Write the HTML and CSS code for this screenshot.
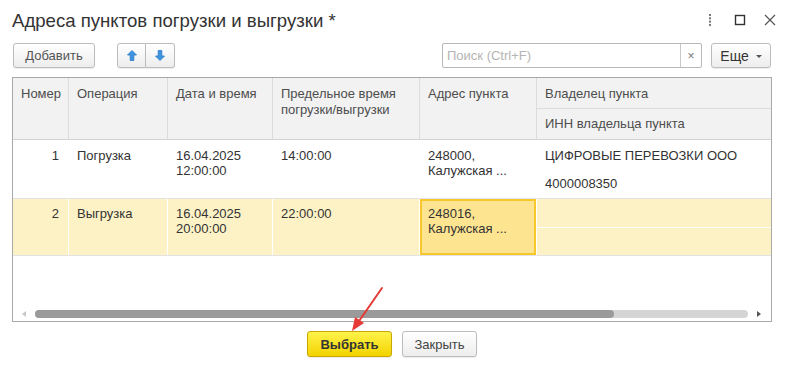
FILE: index.html
```html
<!DOCTYPE html>
<html lang="ru">
<head>
    <meta charset="UTF-8" />
    <title>Адреса пунктов погрузки и выгрузки</title>
    <link rel="stylesheet" href="styles.css">
</head>
<body>
    <div class="window">
        <header class="titlebar">
            <h1 class="title">Адреса пунктов погрузки и выгрузки *</h1>
            <div class="win-controls">
                <span class="win-btn">
                    <svg width="4" height="12" viewBox="0 0 4 12"><rect x="1" y="0" width="2" height="2" fill="#777"/><rect x="1" y="3.3" width="2" height="2" fill="#777"/><rect x="1" y="6.6" width="2" height="2" fill="#777"/><rect x="1" y="9.9" width="2" height="2" fill="#777"/></svg>
                </span>
                <span class="win-btn">
                    <svg width="12" height="12" viewBox="0 0 12 12"><rect x="1.5" y="1.5" width="9" height="9" fill="none" stroke="#333" stroke-width="1.4"/></svg>
                </span>
                <span class="win-btn">
                    <svg width="12" height="12" viewBox="0 0 12 12"><path d="M1 1 L11 11 M11 1 L1 11" stroke="#555" stroke-width="1.2"/></svg>
                </span>
            </div>
        </header>

        <div class="toolbar">
            <button class="btn btn-add">Добавить</button>
            <div class="btn-group">
                <button class="btn btn-icon">
                    <svg width="10" height="11" viewBox="0 0 10 11"><path d="M5 0.5 L9.5 5 L6.8 5 L6.8 10.5 L3.2 10.5 L3.2 5 L0.5 5 Z" fill="#3d94e0" stroke="#2a78c6" stroke-width="0.8"/></svg>
                </button>
                <button class="btn btn-icon">
                    <svg width="10" height="11" viewBox="0 0 10 11"><path d="M5 10.5 L9.5 6 L6.8 6 L6.8 0.5 L3.2 0.5 L3.2 6 L0.5 6 Z" fill="#3d94e0" stroke="#2a78c6" stroke-width="0.8"/></svg>
                </button>
            </div>
            <div class="search">
                <input type="text" class="search-input" placeholder="Поиск (Ctrl+F)" />
                <span class="search-clear">×</span>
            </div>
            <button class="btn btn-more">Еще <span class="caret"></span></button>
        </div>

        <div class="grid-box">
            <div class="grid-head">
                <div class="hc span2">Номер</div>
                <div class="hc span2">Операция</div>
                <div class="hc span2">Дата и время</div>
                <div class="hc span2">Предельное время погрузки/выгрузки</div>
                <div class="hc span2">Адрес пункта</div>
                <div class="hc">Владелец пункта</div>
                <div class="hc hc-sub">ИНН владельца пункта</div>
            </div>

            <div class="grid-row row-first">
                <div class="c span2 num">1</div>
                <div class="c span2">Погрузка</div>
                <div class="c span2">16.04.2025<br>12:00:00</div>
                <div class="c span2">14:00:00</div>
                <div class="c span2">248000,<br>Калужская ...</div>
                <div class="c">ЦИФРОВЫЕ ПЕРЕВОЗКИ ООО</div>
                <div class="c c-sub">4000008350</div>
            </div>

            <div class="grid-row row-selected">
                <div class="c span2 num">2</div>
                <div class="c span2">Выгрузка</div>
                <div class="c span2">16.04.2025<br>20:00:00</div>
                <div class="c span2">22:00:00</div>
                <div class="c span2 current">248016,<br>Калужская ...</div>
                <div class="c"></div>
                <div class="c c-sub"></div>
            </div>

            <div class="grid-fill"></div>

            <div class="hscroll">
                <span class="arrow-left"></span>
                <div class="track"><div class="thumb"></div></div>
                <span class="arrow-right"></span>
            </div>
        </div>

        <div class="footer">
            <button class="btn btn-primary">Выбрать</button>
            <button class="btn btn-close">Закрыть</button>
        </div>

        <svg class="pointer" width="790" height="370" viewBox="0 0 790 370">
            <line x1="382" y1="288" x2="357" y2="324" stroke="#e53a35" stroke-width="2" stroke-linecap="round"/>
            <polygon points="352,331 355,317 364,323" fill="#e53a35"/>
        </svg>
    </div>
</body>
</html>
```

FILE: styles.css
```css
body {
    margin: 0;
    background-color: #ffffff;
    font-family: "Liberation Sans", Arial, sans-serif;
    font-size: 13px;
    color: #333333;
}
.window {
    position: relative;
    width: 790px;
    height: 370px;
}
.titlebar {
    display: flex;
    align-items: flex-start;
    height: 43px;
    padding: 0 5px 0 12px;
    box-sizing: border-box;
}
.title {
    flex: 1;
    margin: 10px 0 0;
    font-size: 18.6px;
    font-weight: normal;
    line-height: 22px;
    color: #333333;
}
.win-controls {
    display: flex;
    margin-top: 14px;
}
.win-btn {
    display: flex;
    justify-content: center;
    width: 30px;
    height: 12px;
}

/* toolbar */
.toolbar {
    display: flex;
    height: 25px;
    padding: 0 19px 0 13px;
}
.btn {
    height: 25px;
    box-sizing: border-box;
    border: 1px solid #bdbdbd;
    border-radius: 3px;
    background: linear-gradient(#ffffff, #ededed);
    box-shadow: 0 1px 1px rgba(0, 0, 0, 0.08);
    font-family: "Liberation Sans", Arial, sans-serif;
    font-size: 13px;
    color: #555555;
    padding: 0;
    cursor: pointer;
}
.btn-add {
    width: 82px;
}
.btn-group {
    display: flex;
    margin-left: 22px;
}
.btn-icon {
    width: 29px;
    display: flex;
    align-items: center;
    justify-content: center;
}
.btn-group .btn-icon:first-child {
    border-radius: 3px 0 0 3px;
}
.btn-group .btn-icon:last-child {
    border-radius: 0 3px 3px 0;
    border-left: none;
}
.search {
    display: flex;
    margin-left: auto;
    width: 260px;
    height: 25px;
    box-sizing: border-box;
    border: 1px solid #b8b8b8;
    border-radius: 2px;
}
.search-input {
    flex: 1;
    min-width: 0;
    border: none;
    outline: none;
    padding: 0 4px;
    font-family: "Liberation Sans", Arial, sans-serif;
    font-size: 13px;
    color: #333333;
    background: transparent;
}
.search-input::placeholder {
    color: #b4b4b4;
}
.search-clear {
    width: 20px;
    border-left: 1px solid #c8c8c8;
    display: flex;
    align-items: center;
    justify-content: center;
    color: #777777;
    font-size: 12px;
}
.btn-more {
    width: 60px;
    margin-left: 9px;
    font-size: 14px;
    color: #333333;
}
.caret {
    display: inline-block;
    width: 0;
    height: 0;
    margin-left: 3px;
    vertical-align: middle;
    border-left: 3px solid transparent;
    border-right: 3px solid transparent;
    border-top: 3px solid #555555;
}

/* table */
.grid-box {
    display: flex;
    flex-direction: column;
    height: 245px;
    margin: 9px 18px 0 12px;
    box-sizing: border-box;
    border: 1px solid #a9a9a9;
}
.grid-head,
.grid-row {
    display: grid;
    grid-template-columns: 55px 98px 104px 146px 116px 1fr;
    gap: 1px;
}
.grid-head {
    grid-template-rows: 30px 30px;
    background-color: #dcdcdc;
    border-bottom: 1px solid #d4d4d4;
}
.span2 {
    grid-row: span 2;
}
.hc {
    background-color: #f2f2f2;
    padding: 8px 8px 0;
    line-height: 16px;
    color: #4d4d4d;
}
.hc-sub {
    padding-top: 7px;
}
.grid-row {
    background-color: #ffffff;
    border-bottom: 1px solid #e2e2e2;
}
.row-first {
    grid-template-rows: 28px 29px;
}
.row-selected {
    grid-template-rows: 28px 27px;
}
.c {
    background-color: #ffffff;
    padding: 8px 8px 0;
    line-height: 15px;
    overflow: hidden;
}
.c-sub {
    padding-top: 7px;
}
.num {
    text-align: right;
    padding-right: 9px;
}
.row-selected .c {
    background-color: #fdf2c6;
    padding-top: 7px;
}
.row-selected .current {
    background-color: #fde491;
    box-shadow: inset 0 0 0 2px #f8c72b;
}
.grid-fill {
    flex: 1;
}
.hscroll {
    display: flex;
    align-items: center;
    height: 14px;
    padding: 0 10px 0 9px;
}
.arrow-left {
    width: 0;
    height: 0;
    border-top: 3px solid transparent;
    border-bottom: 3px solid transparent;
    border-right: 4px solid #c8c8c8;
}
.arrow-right {
    width: 0;
    height: 0;
    border-top: 3px solid transparent;
    border-bottom: 3px solid transparent;
    border-left: 4px solid #555555;
}
.track {
    flex: 1;
    height: 8px;
    margin: 0 9px;
    border-radius: 4px;
    background-color: #d5d5d5;
}
.thumb {
    width: 579px;
    height: 8px;
    border-radius: 4px;
    background-color: #9a9a9a;
}

/* footer */
.footer {
    display: flex;
    justify-content: center;
    gap: 10px;
    margin: 9px 18px 0 12px;
}
.footer .btn {
    height: 26px;
}
.btn-primary {
    width: 85px;
    background: linear-gradient(#fff34a, #f3d300);
    border-color: #c9a700;
    font-weight: bold;
    color: #333333;
}
.btn-close {
    width: 75px;
    color: #444444;
}
.pointer {
    position: absolute;
    left: 0;
    top: 0;
    pointer-events: none;
}
```
